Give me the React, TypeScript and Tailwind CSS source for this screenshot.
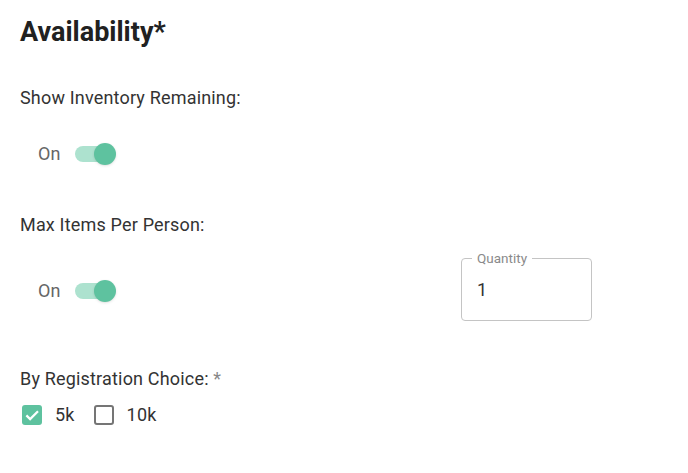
import { useState } from 'react';

const font = { fontFamily: 'Roboto, "Noto Sans", sans-serif' };

function Toggle({ on, onChange }: { on: boolean; onChange: () => void }) {
  return (
    <button
      type="button"
      onClick={onChange}
      className="relative flex h-[22px] w-[41px] items-center"
    >
      <span
        className={`h-[16px] w-[38px] rounded-full ${on ? 'bg-[#ade2cf]' : 'bg-[#bdbdbd]'}`}
      />
      <span
        className={`absolute top-0 h-[22px] w-[22px] rounded-full shadow-sm ${
          on ? 'left-[19px] bg-[#5ec29f]' : 'left-0 bg-[#fafafa]'
        }`}
      />
    </button>
  );
}

function Check({ checked, label, onChange }: { checked: boolean; label: string; onChange: () => void }) {
  return (
    <label className="flex cursor-pointer items-center gap-[13px]" onClick={onChange}>
      <span
        className={`flex h-[20px] w-[20px] items-center justify-center rounded-[3px] ${
          checked ? 'bg-[#5ec29f]' : 'border-2 border-[#757575]'
        }`}
      >
        {checked && (
          <svg viewBox="0 0 24 24" className="h-[18px] w-[18px]" fill="none">
            <path d="M4.5 12.5l5 5L20 7" stroke="white" strokeWidth="3" />
          </svg>
        )}
      </span>
      <span className="text-[18px] tracking-[0.01em] text-[#333]">{label}</span>
    </label>
  );
}

export default function App() {
  const [showInventory, setShowInventory] = useState(true);
  const [maxItems, setMaxItems] = useState(true);
  const [choices, setChoices] = useState({ '5k': true, '10k': false });

  return (
    <div className="h-[473px] w-[688px] bg-white px-5 pt-[14px]" style={font}>
      <h1 className="text-[27px] font-bold leading-[36px] text-[#212121]">Availability*</h1>

      <p className="mt-[37px] text-[18px] leading-[22px] tracking-[0.01em] text-[#333]">
        Show Inventory Remaining:
      </p>
      <div className="mt-[31px] flex items-center gap-[14px] pl-[18px]">
        <span className="text-[18px] tracking-[0.01em] text-[#666]">On</span>
        <Toggle on={showInventory} onChange={() => setShowInventory(!showInventory)} />
      </div>

      <p className="mt-[47px] text-[18px] leading-[22px] tracking-[0.01em] text-[#333]">
        Max Items Per Person:
      </p>
      <div className="mt-[24px] flex items-center justify-between pr-[76px]">
        <div className="flex items-center gap-[14px] pl-[18px]">
          <span className="text-[18px] tracking-[0.01em] text-[#666]">On</span>
          <Toggle on={maxItems} onChange={() => setMaxItems(!maxItems)} />
        </div>
        <div className="relative mt-[-2px] flex h-[63px] w-[131px] items-center rounded-[4px] border border-[#c4c4c4] px-[15px]">
          <span className="absolute left-[10px] top-[-9px] bg-white px-[5px] text-[13.5px] leading-[16px] text-[#8a8a8a]">
            Quantity
          </span>
          <input
            defaultValue="1"
            className="w-full text-[18px] text-[#333] outline-none"
          />
        </div>
      </div>

      <p className="mt-[47px] text-[18px] leading-[22px] tracking-[0.01em] text-[#333]">
        By Registration Choice: <span className="text-[#888]">*</span>
      </p>
      <div className="mt-[11px] flex items-center gap-[19px] pl-[2px]">
        {(['5k', '10k'] as const).map((c) => (
          <Check
            key={c}
            label={c}
            checked={choices[c]}
            onChange={() => setChoices({ ...choices, [c]: !choices[c] })}
          />
        ))}
      </div>
    </div>
  );
}
